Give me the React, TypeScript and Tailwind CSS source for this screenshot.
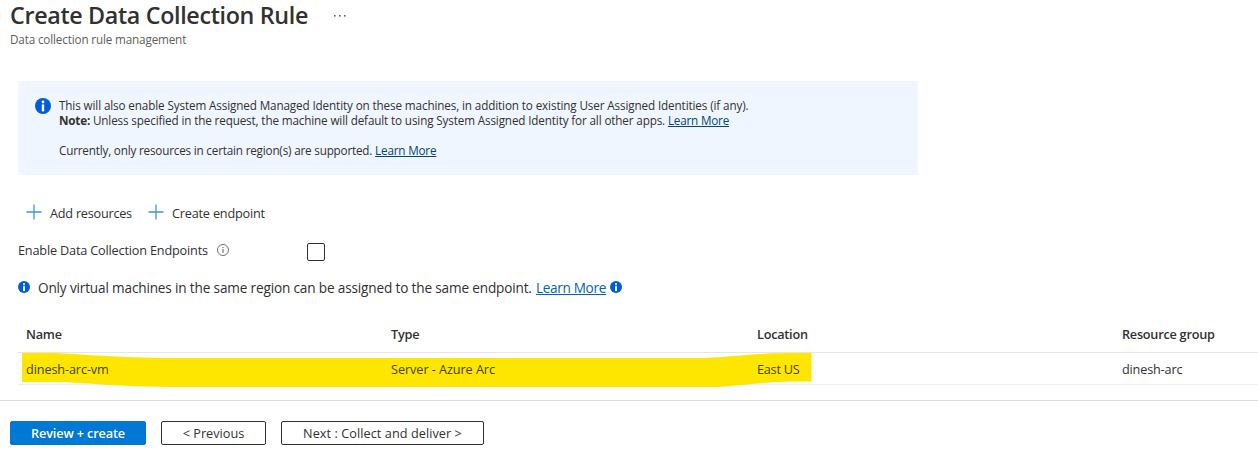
const SolidInfo = ({ size, className = "" }: { size: number; className?: string }) => (
  <svg width={size} height={size} viewBox="0 0 16 16" className={`shrink-0 ${className}`} aria-hidden="true">
    <circle cx="8" cy="8" r="8" fill="#015cda" />
    <circle cx="8" cy="4" r="1.4" fill="#fff" />
    <rect x="6.8" y="6.4" width="2.4" height="7" fill="#fff" />
  </svg>
);

const OutlineInfo = () => (
  <svg width="12" height="12" viewBox="0 0 12 12" className="shrink-0" aria-hidden="true">
    <circle cx="6" cy="6" r="5.5" fill="none" stroke="#605e5c" strokeWidth="0.9" />
    <rect x="5.5" y="3" width="1" height="1.1" fill="#605e5c" />
    <rect x="5.5" y="5" width="1" height="4" fill="#605e5c" />
  </svg>
);

const Plus = () => (
  <svg width="16" height="16" viewBox="0 0 16 16" className="mt-px shrink-0" aria-hidden="true">
    <path d="M8 0.5V15.5M0.5 8H15.5" stroke="#3f97cf" strokeWidth="1.3" fill="none" />
  </svg>
);

const Marker = () => (
  <svg width="790" height="36" viewBox="0 0 790 36" className="absolute -top-px left-1 z-0" aria-hidden="true">
    <path
      d="M0 1H32C60 2 85 5 140 6H683C710 5 730 1.5 765 1H789.5V29.6H770C745 30 720 33 698 35H160C90 35 70 30.5 32 30H0Z"
      fill="#ffe600"
    />
  </svg>
);

export default function App() {
  return (
    <div className="flex h-[454px] w-[1258px] flex-col overflow-hidden bg-white font-['Open_Sans','Noto_Sans',sans-serif] text-[12.7px] leading-5 text-[#323130]">
      <header className="h-[81px] pl-[10px]">
        <div className="flex h-[31px] items-start">
          <h1 className="w-[323px] whitespace-nowrap text-[23.3px] font-semibold leading-[30px] tracking-[-0.34px]">
            Create Data Collection Rule
          </h1>
          <svg width="14" height="4" viewBox="0 0 14 4" className="mt-[14px]" aria-hidden="true">
            <g fill="#605e5c">
              <rect x="1" y="1" width="1.6" height="1.6" />
              <rect x="6" y="1" width="1.6" height="1.6" />
              <rect x="11" y="1" width="1.6" height="1.6" />
            </g>
          </svg>
        </div>
        <p className="text-[11.7px] leading-4 tracking-[-0.15px] text-[#605e5c]">Data collection rule management</p>
      </header>

      <section className="ml-[18px] flex h-[94px] w-[900px] bg-[#f0f6ff] pl-[17px] pt-[17px] text-[11.7px] leading-[15px]">
        <SolidInfo size={16} />
        <div className="ml-2 whitespace-nowrap">
          <p className="tracking-[-0.122px]">
            This will also enable System Assigned Managed Identity on these machines, in addition to existing User
            Assigned Identities (if any).
          </p>
          <p className="tracking-[-0.138px]">
            <b className="tracking-[-0.2px]">Note:</b> Unless specified in the request, the machine will default to
            using System Assigned Identity for all other apps.{" "}
            <a className="tracking-[-0.2px] text-[#004578] underline underline-offset-1">Learn More</a>
          </p>
          <p className="mt-[15px] tracking-[-0.184px]">
            Currently, only resources in certain region(s) are supported.{" "}
            <a className="text-[#004578] underline underline-offset-1">Learn More</a>
          </p>
        </div>
      </section>

      <div className="ml-[26px] mt-7 flex h-5">
        <button className="flex w-[122px] gap-2 whitespace-nowrap tracking-[-0.24px]">
          <Plus />
          <span>Add resources</span>
        </button>
        <button className="flex gap-2 whitespace-nowrap tracking-[-0.2px]">
          <Plus />
          <span>Create endpoint</span>
        </button>
      </div>

      <div className="ml-[18px] mt-[17px] flex h-5">
        <label className="flex w-[289px] gap-[9px] whitespace-nowrap tracking-[-0.18px]">
          Enable Data Collection Endpoints
          <span className="mt-1">
            <OutlineInfo />
          </span>
        </label>
        <span className="mt-[3px] block size-[18px] shrink-0 rounded-[2px] border border-[#323130]" />
      </div>

      <div className="ml-[18px] mt-[18px] flex h-5 whitespace-nowrap text-[13.6px]">
        <SolidInfo size={12} className="mt-[3px]" />
        <span className="ml-2 w-[498px] tracking-[-0.16px]">
          Only virtual machines in the same region can be assigned to the same endpoint.
        </span>
        <a className="w-[74px] tracking-[-0.33px] text-[#0065b3]">
          <span className="underline underline-offset-1">Learn More</span>
        </a>
        <SolidInfo size={12} className="mt-[3px]" />
      </div>

      <div className="ml-[18px] mt-[26px]">
        <div className="grid h-[29px] grid-cols-[365px_366px_365px_1fr] border-b border-[#e6e6e6] pl-2 font-semibold tracking-[-0.24px]">
          <span>Name</span>
          <span>Type</span>
          <span>Location</span>
          <span>Resource group</span>
        </div>
        <div className="relative grid h-8 grid-cols-[365px_366px_365px_1fr] border-b border-[#eeeeee] pl-2 pt-[6px]">
          <Marker />
          <span className="relative z-10 tracking-[-0.12px] text-[#453f00]">dinesh-arc-vm</span>
          <span className="relative z-10 tracking-[-0.07px] text-[#453f00]">Server - Azure Arc</span>
          <span className="relative z-10 tracking-[-0.25px] text-[#453f00]">East US</span>
          <span className="tracking-[-0.18px]">dinesh-arc</span>
        </div>
      </div>

      <footer className="mt-[15px] flex gap-[15px] border-t border-[#dcdcdc] pl-[10px] pt-5 leading-[22px]">
        <button className="h-6 w-[136px] rounded-[2px] border border-[#0078d4] bg-[#0078d4] font-semibold tracking-[-0.14px] text-white">
          Review + create
        </button>
        <button className="h-6 w-[105px] rounded-[2px] border border-[#323130]">&lt; Previous</button>
        <button className="h-6 w-[203px] rounded-[2px] border border-[#323130] tracking-[0.06px]">
          Next : Collect and deliver &gt;
        </button>
      </footer>
    </div>
  );
}
